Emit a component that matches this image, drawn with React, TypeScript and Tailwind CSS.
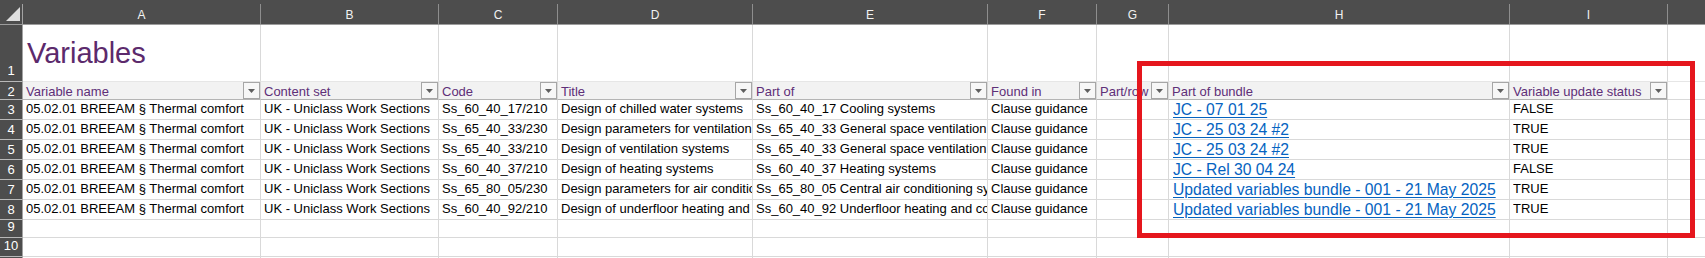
import React from "react"

type Col = { w: string; letter: string; header: string }

const cols: Col[] = [
  { w: "w-[238px]", letter: "A", header: "Variable name" },
  { w: "w-[178px]", letter: "B", header: "Content set" },
  { w: "w-[119px]", letter: "C", header: "Code" },
  { w: "w-[195px]", letter: "D", header: "Title" },
  { w: "w-[235px]", letter: "E", header: "Part of" },
  { w: "w-[109px]", letter: "F", header: "Found in" },
  { w: "w-[72px]", letter: "G", header: "Part/row" },
  { w: "w-[341px]", letter: "H", header: "Part of bundle" },
  { w: "w-[158px]", letter: "I", header: "Variable update status" },
]

const rows: string[][] = [
  [
    "05.02.01 BREEAM § Thermal comfort",
    "UK - Uniclass Work Sections",
    "Ss_60_40_17/210",
    "Design of chilled water systems",
    "Ss_60_40_17 Cooling systems",
    "Clause guidance",
    "",
    "JC - 07 01 25",
    "FALSE",
  ],
  [
    "05.02.01 BREEAM § Thermal comfort",
    "UK - Uniclass Work Sections",
    "Ss_65_40_33/230",
    "Design parameters for ventilation",
    "Ss_65_40_33 General space ventilation",
    "Clause guidance",
    "",
    "JC - 25 03 24 #2",
    "TRUE",
  ],
  [
    "05.02.01 BREEAM § Thermal comfort",
    "UK - Uniclass Work Sections",
    "Ss_65_40_33/210",
    "Design of ventilation systems",
    "Ss_65_40_33 General space ventilation",
    "Clause guidance",
    "",
    "JC - 25 03 24 #2",
    "TRUE",
  ],
  [
    "05.02.01 BREEAM § Thermal comfort",
    "UK - Uniclass Work Sections",
    "Ss_60_40_37/210",
    "Design of heating systems",
    "Ss_60_40_37 Heating systems",
    "Clause guidance",
    "",
    "JC - Rel 30 04 24",
    "FALSE",
  ],
  [
    "05.02.01 BREEAM § Thermal comfort",
    "UK - Uniclass Work Sections",
    "Ss_65_80_05/230",
    "Design parameters for air conditioning",
    "Ss_65_80_05 Central air conditioning systems",
    "Clause guidance",
    "",
    "Updated variables bundle - 001 - 21 May 2025",
    "TRUE",
  ],
  [
    "05.02.01 BREEAM § Thermal comfort",
    "UK - Uniclass Work Sections",
    "Ss_60_40_92/210",
    "Design of underfloor heating and cooling systems",
    "Ss_60_40_92 Underfloor heating and cooling systems",
    "Clause guidance",
    "",
    "Updated variables bundle - 001 - 21 May 2025",
    "TRUE",
  ],
]

function RowNum({ n, className }: { n: number; className: string }) {
  return (
    <div
      className={`w-[23px] shrink-0 bg-[#4d4d4d] border-r border-b border-r-[#a3a3a3] border-b-[#b8b8b8] text-white text-[13px] leading-[13px] flex justify-center ${className}`}
    >
      {n}
    </div>
  )
}

function FilterButton() {
  return (
    <div className="w-[17px] h-[17px] shrink-0 border border-[#a6a6a6] bg-[#f7f7f7] flex items-center justify-center">
      <svg width="7" height="4" viewBox="0 0 7 4">
        <polygon points="0,0 7,0 3.5,4" fill="#5f5f5f" />
      </svg>
    </div>
  )
}

function EmptyRow({ n, h, numClass }: { n: number; h: string; numClass: string }) {
  return (
    <div className={`flex ${h}`}>
      <RowNum n={n} className={numClass} />
      {cols.map((c) => (
        <div key={c.letter} className={`${c.w} shrink-0 border-r border-b border-[#d9d9d9]`} />
      ))}
      <div className="flex-1 border-b border-[#d9d9d9]" />
    </div>
  )
}

export default function App() {
  return (
    <div
      className="relative w-[1705px] h-[258px] overflow-hidden bg-white text-black"
      style={{ fontFamily: '"Liberation Sans", Arial, sans-serif' }}
    >
      {/* column letters */}
      <div className="flex h-[25px] bg-[#4d4d4d] pt-[4px] border-b border-[#9c9c9c]">
        <div className="w-[23px] shrink-0 border-r border-[#a3a3a3]">
          <svg width="14" height="14" viewBox="0 0 14 14" className="ml-[6px] mt-[3px]">
            <polygon points="14,0 14,14 0,14" fill="#dedede" />
          </svg>
        </div>
        {cols.map((c) => (
          <div
            key={c.letter}
            className={`${c.w} shrink-0 border-r border-[#8e8e8e] flex items-center justify-center pt-[2px] text-[12px] leading-[14px] text-[#f2f2f2]`}
          >
            {c.letter}
          </div>
        ))}
        <div className="flex-1" />
      </div>

      {/* row 1: title */}
      <div className="flex h-[57px]">
        <RowNum n={1} className="items-end pb-[4px]" />
        {cols.map((c, i) => (
          <div
            key={c.letter}
            className={`${c.w} shrink-0 border-r border-b border-r-[#d9d9d9] border-b-[#e6e6e6] flex items-center`}
          >
            {i === 0 && (
              <span className="pl-[4px] text-[29px] leading-[33px] text-[#5c2a6c] whitespace-nowrap">
                Variables
              </span>
            )}
          </div>
        ))}
        <div className="flex-1 border-b border-[#e6e6e6]" />
      </div>

      {/* row 2: table header */}
      <div className="flex h-[18px]">
        <RowNum n={2} className="items-start pt-[3px]" />
        {cols.map((c) => (
          <div
            key={c.letter}
            className={`${c.w} shrink-0 border-r border-b border-r-[#d9d9d9] border-b-[#b4b4b4] bg-[#f2f2f2] flex items-end`}
          >
            <div className="flex-1 min-w-0 overflow-hidden whitespace-nowrap pl-[3px] text-[13px] leading-[14px] text-[#5e2f78]">
              {c.header}
            </div>
            <FilterButton />
          </div>
        ))}
        <div className="flex-1 border-b border-[#d9d9d9]" />
      </div>

      {/* data rows */}
      {rows.map((r, ri) => (
        <div key={ri} className="flex h-[20px]">
          <RowNum n={ri + 3} className="items-start pt-[3px]" />
          {cols.map((c, ci) =>
            ci === 7 ? (
              <div
                key={c.letter}
                className={`${c.w} shrink-0 border-r border-b border-[#d9d9d9] overflow-hidden whitespace-nowrap pl-[4px] flex items-end`}
              >
                <span className="text-[15.7px] leading-[18px] text-[#0563c1] underline underline-offset-[2px]">
                  {r[ci]}
                </span>
              </div>
            ) : (
              <div
                key={c.letter}
                className={`${c.w} shrink-0 border-r border-b border-[#d9d9d9] pl-[3px] pb-[3px] flex items-end`}
              >
                <span className="block w-full overflow-hidden whitespace-nowrap text-[13px] leading-[15px]">
                  {r[ci]}
                </span>
              </div>
            )
          )}
          <div className="flex-1 border-b border-[#d9d9d9]" />
        </div>
      ))}

      <EmptyRow n={9} h="h-[18px]" numClass="items-start pt-0" />
      <EmptyRow n={10} h="h-[19px]" numClass="items-start pt-[1px]" />
      <EmptyRow n={11} h="h-[19px]" numClass="items-start pt-[1px]" />

      {/* annotation box */}
      <div className="absolute left-[1137px] top-[61px] w-[558px] h-[177px] border-[5px] border-[#e5161d]" />
    </div>
  )
}
